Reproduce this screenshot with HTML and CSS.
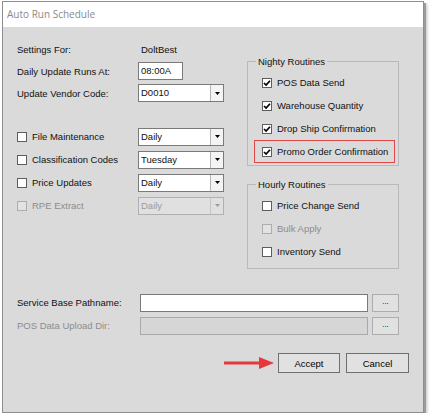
FILE: index.html
```html
<!DOCTYPE html>
<html lang="en">
<head>
    <meta charset="UTF-8">
    <meta name="viewport" content="width=device-width, initial-scale=1.0">
    <title>Auto Run Schedule</title>
    <link rel="stylesheet" href="styles.css">
</head>
<body>
    <div class="window">
        <div class="titlebar">Auto Run Schedule</div>
        <div class="content">
            <div class="top">
                <div class="left">
                    <div class="form-grid">
                        <span>Settings For:</span>
                        <span class="value">DoltBest</span>
                        <span>Daily Update Runs At:</span>
                        <div class="textbox short">08:00A</div>
                        <span>Update Vendor Code:</span>
                        <div class="combo"><span class="combo-text">D0010</span><span class="arrow"><svg width="5" height="3" viewBox="0 0 5 3"><polygon points="0,0 5,0 2.5,3" fill="#000"/></svg></span></div>
                    </div>
                    <div class="tasks">
                        <div class="check"><span class="box"></span>File Maintenance</div>
                        <div class="combo"><span class="combo-text">Daily</span><span class="arrow"><svg width="5" height="3" viewBox="0 0 5 3"><polygon points="0,0 5,0 2.5,3" fill="#000"/></svg></span></div>
                        <div class="check"><span class="box"></span>Classification Codes</div>
                        <div class="combo"><span class="combo-text">Tuesday</span><span class="arrow"><svg width="5" height="3" viewBox="0 0 5 3"><polygon points="0,0 5,0 2.5,3" fill="#000"/></svg></span></div>
                        <div class="check"><span class="box"></span>Price Updates</div>
                        <div class="combo"><span class="combo-text">Daily</span><span class="arrow"><svg width="5" height="3" viewBox="0 0 5 3"><polygon points="0,0 5,0 2.5,3" fill="#000"/></svg></span></div>
                        <div class="check disabled"><span class="box"></span>RPE Extract</div>
                        <div class="combo disabled"><span class="combo-text">Daily</span><span class="arrow"><svg width="5" height="3" viewBox="0 0 5 3"><polygon points="0,0 5,0 2.5,3" fill="#9a9a9a"/></svg></span></div>
                    </div>
                </div>
                <div class="right">
                    <fieldset class="group nightly">
                        <legend>Nighty Routines</legend>
                        <div class="check"><span class="box"><svg width="8" height="8" viewBox="0 0 8 8"><path d="M1 4 L3.1 6.1 L7 1.8" fill="none" stroke="#000" stroke-width="1.7"/></svg></span>POS Data Send</div>
                        <div class="check"><span class="box"><svg width="8" height="8" viewBox="0 0 8 8"><path d="M1 4 L3.1 6.1 L7 1.8" fill="none" stroke="#000" stroke-width="1.7"/></svg></span>Warehouse Quantity</div>
                        <div class="check"><span class="box"><svg width="8" height="8" viewBox="0 0 8 8"><path d="M1 4 L3.1 6.1 L7 1.8" fill="none" stroke="#000" stroke-width="1.7"/></svg></span>Drop Ship Confirmation</div>
                        <div class="check highlight"><span class="box"><svg width="8" height="8" viewBox="0 0 8 8"><path d="M1 4 L3.1 6.1 L7 1.8" fill="none" stroke="#000" stroke-width="1.7"/></svg></span>Promo Order Confirmation</div>
                    </fieldset>
                    <fieldset class="group hourly">
                        <legend>Hourly Routines</legend>
                        <div class="check"><span class="box"></span>Price Change Send</div>
                        <div class="check disabled"><span class="box"></span>Bulk Apply</div>
                        <div class="check"><span class="box"></span>Inventory Send</div>
                    </fieldset>
                </div>
            </div>
            <div class="paths">
                <span>Service Base Pathname:</span>
                <div class="textbox"></div>
                <button class="browse">...</button>
                <span class="muted">POS Data Upload Dir:</span>
                <div class="textbox disabled"></div>
                <button class="browse">...</button>
            </div>
            <div class="actions">
                <svg class="pointer" width="50" height="14" viewBox="0 0 50 14">
                    <line x1="0" y1="7" x2="38" y2="7" stroke="#e5383b" stroke-width="3"/>
                    <polygon points="35,1 50,7 35,13" fill="#e5383b"/>
                </svg>
                <button class="btn">Accept</button>
                <button class="btn wide">Cancel</button>
            </div>
        </div>
    </div>
</body>
</html>
```

FILE: styles.css
```css
body {
    margin: 0;
    background: #fff;
    font-family: "Liberation Sans", Arial, sans-serif;
    font-size: 9.5px;
    color: #111;
}
.window {
    width: 422px;
    height: 412px;
    margin: 1px 0 0 2px;
    box-sizing: border-box;
    border: 1px solid #8e8e8e;
    box-shadow: 2px 2px 0 #9b9b9b, 3px 3px 3px rgba(0, 0, 0, 0.25);
    display: flex;
    flex-direction: column;
}
.titlebar {
    height: 25px;
    line-height: 25px;
    padding-left: 4px;
    background: #fff;
    font-family: "Open Sans", sans-serif;
    font-size: 10px;
    color: #8a8a8a;
}
.content {
    flex: 1;
    background: #dadada;
    padding: 11px 14px 0 14px;
}
.top {
    display: flex;
}
.left {
    width: 230px;
}
.right {
    width: 152px;
    margin-top: 17px;
}
.form-grid {
    display: grid;
    grid-template-columns: 121px auto;
    grid-auto-rows: 22px;
    align-items: center;
}
.value {
    padding-left: 3px;
}
.tasks {
    display: grid;
    grid-template-columns: 121px 86px;
    grid-auto-rows: 23px;
    align-items: center;
    margin-top: 21px;
}
.textbox {
    box-sizing: border-box;
    height: 18px;
    line-height: 16px;
    padding-left: 2px;
    background: #fff;
    border: 1px solid #7a7a7a;
}
.textbox.short {
    width: 45px;
}
.textbox.disabled {
    background: #d6d6d6;
    border-color: #a9a9a9;
}
.combo {
    box-sizing: border-box;
    width: 86px;
    height: 18px;
    display: flex;
    background: #fff;
    border: 1px solid #7a7a7a;
}
.combo-text {
    flex: 1;
    line-height: 16px;
    padding-left: 2px;
}
.arrow {
    width: 12px;
    display: flex;
    align-items: center;
    justify-content: center;
    border-left: 1px solid #b5b5b5;
    background: #f4f4f4;
}
.combo.disabled {
    background: #e0e0e0;
    border-color: #b0b0b0;
    color: #9a9a9a;
}
.combo.disabled .arrow {
    background: #e0e0e0;
    border-left-color: #c4c4c4;
}
.check {
    display: flex;
    align-items: center;
    gap: 5px;
    height: 23px;
}
.box {
    box-sizing: border-box;
    width: 10px;
    height: 10px;
    display: flex;
    align-items: center;
    justify-content: center;
    background: #fff;
    border: 1px solid #5e5e5e;
}
.check.disabled {
    color: #8d8d8d;
}
.check.disabled .box {
    background: #e2e2e2;
    border-color: #adadad;
}
.group {
    margin: 0;
    min-width: 0;
    border: 1px solid #b9b9b9;
    padding: 3px 0 2px 14px;
}
.group legend {
    margin-left: -6px;
    padding: 0 2px;
    line-height: 13px;
}
.hourly {
    margin-top: 12px;
    padding-bottom: 5px;
}
.check.highlight {
    height: 21px;
    margin: 0 3px 0 -8px;
    padding-left: 7px;
    border: 1px solid #e04848;
}
.paths {
    display: grid;
    grid-template-columns: 119px 228px 27px;
    column-gap: 4px;
    grid-auto-rows: 23px;
    align-items: center;
    margin-top: 22px;
}
.muted {
    color: #8d8d8d;
}
.browse {
    height: 18px;
    padding: 0 0 3px;
    font-family: inherit;
    font-size: 8px;
    background: #e1e1e1;
    border: 1px solid #adadad;
}
.actions {
    display: flex;
    justify-content: flex-end;
    align-items: center;
    gap: 6px;
    margin-top: 16px;
}
.pointer {
    margin-right: -2px;
}
.btn {
    width: 62px;
    height: 20px;
    padding: 0;
    font-family: inherit;
    font-size: 9.5px;
    color: #000;
    background: #e1e1e1;
    border: 1px solid #6f6f6f;
}
.btn.wide {
    width: 63px;
}
```
